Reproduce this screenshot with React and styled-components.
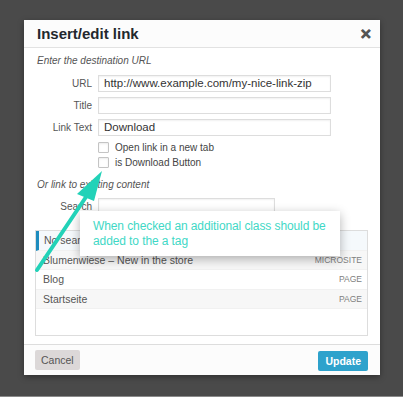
import React from "react"
import styled, {createGlobalStyle} from "styled-components"

const Global = createGlobalStyle`
html,body{
margin:0;
padding:0;
background:#4a4a4a;
}
body{
font-family:"Liberation Sans",Arial,sans-serif;
}
`

const Page = styled.div`
width:403px;
height:397px;
box-sizing:border-box;
padding:20px 0 0 24px;
position:relative;
overflow:hidden;
border-bottom:1px solid #8a8a8a;
`

const Dialog = styled.div`
width:356px;
height:355px;
background:#fff;
display:flex;
flex-direction:column;
box-shadow:0 2px 6px rgba(0,0,0,0.35);
`

const Header = styled.div`
height:27px;
flex-shrink:0;
border-bottom:1px solid #e2e2e2;
background:#fcfcfc;
display:flex;
align-items:center;
justify-content:space-between;
padding:0 8px 0 13px;
`

const Title = styled.h1`
margin:0;
font-size:15px;
font-weight:bold;
color:#23282d;
`

const Close = styled.span`
font-size:14px;
font-weight:bold;
color:#555;
line-height:1;
-webkit-text-stroke:0.6px #555;
`

const Body = styled.div`
flex:1;
padding:6px 12px 0 13px;
position:relative;
`

const Note = styled.p`
margin:${props=>props.top}px 0 0 0;
font-size:10px;
line-height:14px;
font-style:italic;
color:#555;
`

const Fields = styled.div`
display:grid;
grid-template-columns:55px ${props=>props.inputWidth}px;
column-gap:6px;
row-gap:5px;
margin-top:${props=>props.top}px;
`

const Label = styled.label`
font-size:10px;
color:#555;
text-align:right;
line-height:17px;
`

const Input = styled.div`
height:17px;
box-sizing:border-box;
border:1px solid #ddd;
box-shadow:inset 0 1px 2px rgba(0,0,0,0.06);
padding:0 5px;
font-size:11.5px;
line-height:15px;
color:#333;
white-space:nowrap;
overflow:hidden;
`

const Checks = styled.div`
display:flex;
flex-direction:column;
gap:3px;
margin:5px 0 0 61px;
`

const CheckRow = styled.div`
display:flex;
align-items:center;
gap:6px;
height:12px;
font-size:10px;
color:#444;
`

const Box = styled.span`
width:11px;
height:11px;
box-sizing:border-box;
border:1px solid #c4c4c4;
border-radius:1px;
background:#fff;
box-shadow:inset 0 1px 2px rgba(0,0,0,0.08);
`

const Results = styled.div`
margin-top:15px;
margin-left:-2px;
height:106px;
box-sizing:border-box;
border:1px solid #ddd;
`

const ResultRow = styled.div`
height:19.5px;
box-sizing:border-box;
display:flex;
align-items:center;
justify-content:space-between;
padding:0 5px 0 ${props=>props.notice ? 5 : 7}px;
background:${props=>props.notice ? "#f5f9fc" : props.alt ? "#f7f7f7" : "#fff"};
border-left:${props=>props.notice ? "3px solid #1e8cbe" : "none"};
border-bottom:1px solid #f1f1f1;
font-size:10.5px;
color:#555;
`

const Kind = styled.span`
font-size:8.5px;
text-transform:uppercase;
color:#808080;
`

const Footer = styled.div`
height:31px;
flex-shrink:0;
box-sizing:border-box;
border-top:1px solid #ddd;
background:#fcfcfc;
display:flex;
align-items:center;
justify-content:space-between;
padding:0 12px 0 11px;
`

const Button = styled.div`
height:20px;
padding:0 ${props=>props.primary ? 7 : 6}px;
display:flex;
align-items:center;
border-radius:2px;
font-size:10.5px;
font-weight:${props=>props.primary ? "bold" : "normal"};
background:${props=>props.primary ? "#2ea2cc" : "#dcd8d8"};
color:${props=>props.primary ? "#fff" : "#555"};
margin-top:${props=>props.primary ? 2 : 0}px;
`

const Tooltip = styled.div`
position:absolute;
left:80px;
top:211px;
width:260px;
height:45px;
box-sizing:border-box;
background:#fff;
box-shadow:0 3px 10px rgba(0,0,0,0.3);
padding:8px 10px 0 13px;
font-family:"Liberation Sans",Arial,sans-serif;
font-size:12px;
line-height:15px;
letter-spacing:-0.1px;
color:#3fd8c6;
`

const Arrow = styled.svg`
position:absolute;
left:0;
top:0;
pointer-events:none;
`

const App = ()=>{
	return(
		<>
			<Global/>
			<Page>
				<Dialog>
					<Header>
						<Title>Insert/edit link</Title>
						<Close>✕</Close>
					</Header>
					<Body>
						<Note top={0}>Enter the destination URL</Note>
						<Fields top={7} inputWidth={233}>
							<Label>URL</Label>
							<Input>http://www.example.com/my-nice-link-zip</Input>
							<Label>Title</Label>
							<Input/>
							<Label>Link Text</Label>
							<Input>Download</Input>
						</Fields>
						<Checks>
							<CheckRow><Box/>Open link in a new tab</CheckRow>
							<CheckRow><Box/>is Download Button</CheckRow>
						</Checks>
						<Note top={10}>Or link to existing content</Note>
						<Fields top={6} inputWidth={177}>
							<Label>Search</Label>
							<Input/>
						</Fields>
						<Results>
							<ResultRow notice>No search term specified. Showing recent items.</ResultRow>
							<ResultRow alt>Blumenwiese – New in the store<Kind>Microsite</Kind></ResultRow>
							<ResultRow>Blog<Kind>Page</Kind></ResultRow>
							<ResultRow alt>Startseite<Kind>Page</Kind></ResultRow>
						</Results>
					</Body>
					<Footer>
						<Button>Cancel</Button>
						<Button primary>Update</Button>
					</Footer>
				</Dialog>
				<Tooltip>When checked an additional class should be added to the a tag</Tooltip>
				<Arrow width="403" height="397" viewBox="0 0 403 397">
					<line x1="37" y1="270" x2="90" y2="191" stroke="#22d2b8" strokeWidth="4" strokeLinecap="round"/>
					<polygon points="102,171 77,194 94,201" fill="#22d2b8"/>
				</Arrow>
			</Page>
		</>
		)
}

export default App
